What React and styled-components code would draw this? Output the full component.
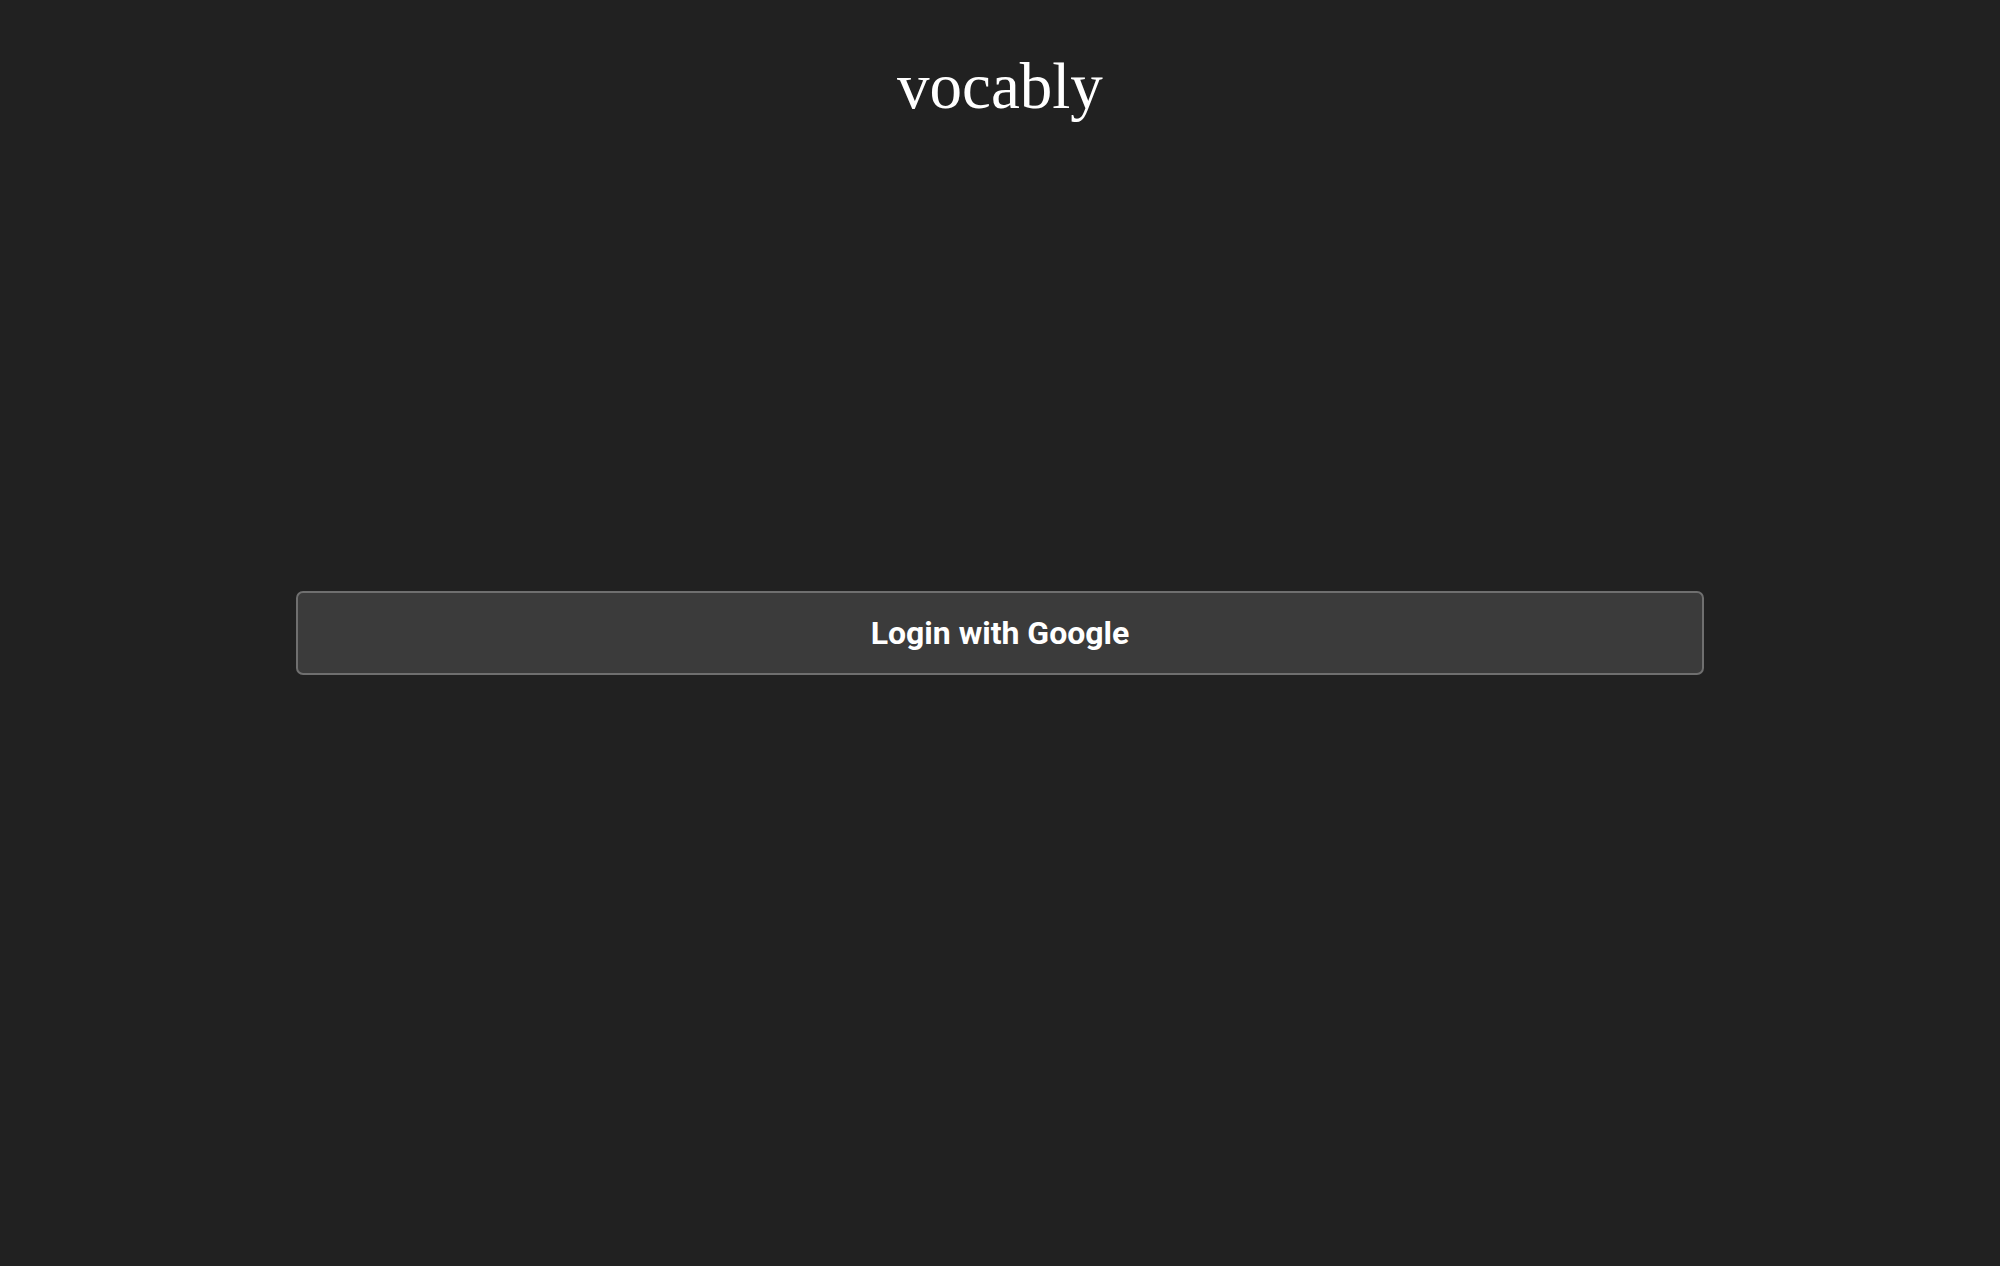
import React from "react";
import styled, { createGlobalStyle } from "styled-components";

const GlobalStyle = createGlobalStyle`
  html, body {
    margin: 0;
    padding: 0;
    background-color: #212121;
  }
`;

const Page = styled.div`
  height: 100vh;
  display: grid;
  grid-template-rows: 1fr auto 1fr;
  justify-items: center;
  background-color: #212121;
`;

const Header = styled.header`
  align-self: start;
  padding-top: 54px;
`;

const Logo = styled.h1`
  margin: 0;
  font-family: "Liberation Serif", "DejaVu Serif", serif;
  font-weight: 400;
  font-size: 65px;
  line-height: 1;
  color: #ffffff;
`;

const LoginButton = styled.button`
  box-sizing: border-box;
  width: 1408px;
  height: 84px;
  background-color: #3b3b3b;
  border: 2px solid #6f6f6f;
  border-radius: 7px;
  color: #ffffff;
  font-family: Roboto, "Liberation Sans", sans-serif;
  font-weight: 700;
  font-size: 32px;
  cursor: pointer;

  &:hover {
    background-color: #444444;
  }
`;

function App() {
  return (
    <>
      <GlobalStyle />
      <Page>
        <Header>
          <Logo>vocably</Logo>
        </Header>
        <LoginButton>Login with Google</LoginButton>
      </Page>
    </>
  );
}

export default App;
